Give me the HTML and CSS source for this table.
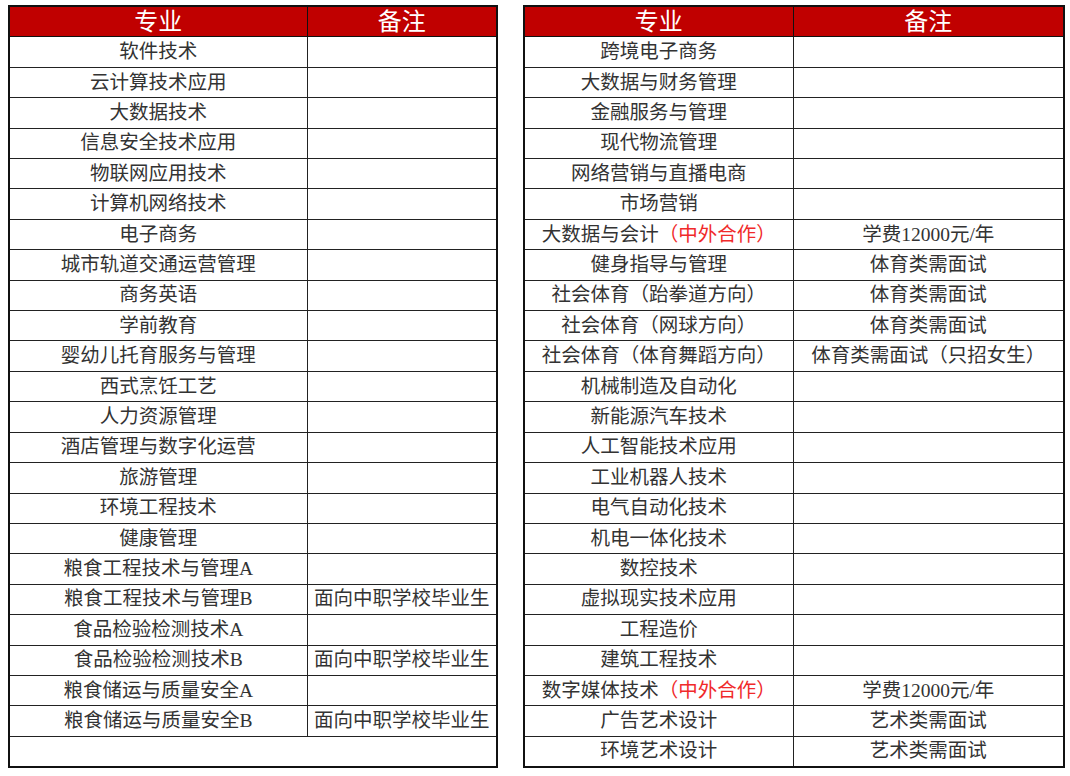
FILE: index.html
```html
<!DOCTYPE html>
<html lang="zh">
<head>
<meta charset="utf-8">
<link rel="stylesheet" href="styles.css">
</head>
<body>
<div class="page">
  <table class="tbl left">
    <colgroup><col class="c1"><col class="c2"></colgroup>
    <thead><tr><th>专业</th><th>备注</th></tr></thead>
    <tbody>
      <tr><td>软件技术</td><td></td></tr>
      <tr><td>云计算技术应用</td><td></td></tr>
      <tr><td>大数据技术</td><td></td></tr>
      <tr><td>信息安全技术应用</td><td></td></tr>
      <tr><td>物联网应用技术</td><td></td></tr>
      <tr><td>计算机网络技术</td><td></td></tr>
      <tr><td>电子商务</td><td></td></tr>
      <tr><td>城市轨道交通运营管理</td><td></td></tr>
      <tr><td>商务英语</td><td></td></tr>
      <tr><td>学前教育</td><td></td></tr>
      <tr><td>婴幼儿托育服务与管理</td><td></td></tr>
      <tr><td>西式烹饪工艺</td><td></td></tr>
      <tr><td>人力资源管理</td><td></td></tr>
      <tr><td>酒店管理与数字化运营</td><td></td></tr>
      <tr><td>旅游管理</td><td></td></tr>
      <tr><td>环境工程技术</td><td></td></tr>
      <tr><td>健康管理</td><td></td></tr>
      <tr><td>粮食工程技术与管理A</td><td></td></tr>
      <tr><td>粮食工程技术与管理B</td><td>面向中职学校毕业生</td></tr>
      <tr><td>食品检验检测技术A</td><td></td></tr>
      <tr><td>食品检验检测技术B</td><td>面向中职学校毕业生</td></tr>
      <tr><td>粮食储运与质量安全A</td><td></td></tr>
      <tr><td>粮食储运与质量安全B</td><td>面向中职学校毕业生</td></tr>
      <tr><td colspan="2"></td></tr>
    </tbody>
  </table>
  <table class="tbl right">
    <colgroup><col class="c3"><col class="c4"></colgroup>
    <thead><tr><th>专业</th><th>备注</th></tr></thead>
    <tbody>
      <tr><td>跨境电子商务</td><td></td></tr>
      <tr><td>大数据与财务管理</td><td></td></tr>
      <tr><td>金融服务与管理</td><td></td></tr>
      <tr><td>现代物流管理</td><td></td></tr>
      <tr><td>网络营销与直播电商</td><td></td></tr>
      <tr><td>市场营销</td><td></td></tr>
      <tr><td>大数据与会计<span class="red">（中外合作）</span></td><td>学费12000元/年</td></tr>
      <tr><td>健身指导与管理</td><td>体育类需面试</td></tr>
      <tr><td>社会体育（跆拳道方向）</td><td>体育类需面试</td></tr>
      <tr><td>社会体育（网球方向）</td><td>体育类需面试</td></tr>
      <tr><td>社会体育（体育舞蹈方向）</td><td>体育类需面试（只招女生）</td></tr>
      <tr><td>机械制造及自动化</td><td></td></tr>
      <tr><td>新能源汽车技术</td><td></td></tr>
      <tr><td>人工智能技术应用</td><td></td></tr>
      <tr><td>工业机器人技术</td><td></td></tr>
      <tr><td>电气自动化技术</td><td></td></tr>
      <tr><td>机电一体化技术</td><td></td></tr>
      <tr><td>数控技术</td><td></td></tr>
      <tr><td>虚拟现实技术应用</td><td></td></tr>
      <tr><td>工程造价</td><td></td></tr>
      <tr><td>建筑工程技术</td><td></td></tr>
      <tr><td>数字媒体技术<span class="red">（中外合作）</span></td><td>学费12000元/年</td></tr>
      <tr><td>广告艺术设计</td><td>艺术类需面试</td></tr>
      <tr><td>环境艺术设计</td><td>艺术类需面试</td></tr>
    </tbody>
  </table>
</div>
</body>
</html>
```

FILE: styles.css
```css
html, body {
  margin: 0;
  padding: 0;
  background: #ffffff;
}

.page {
  display: flex;
  align-items: flex-start;
  gap: 25px;
  padding: 5px 0 0 8px;
  font-family: "Liberation Serif", "Noto Sans CJK SC", serif;
}

.tbl {
  border-collapse: collapse;
  table-layout: fixed;
  border: 2px solid #111;
}

.left { width: 488px; }
.right { width: 540px; }

.c1 { width: 298px; }
.c2 { width: 190px; }
.c3 { width: 269px; }
.c4 { width: 271px; }

.tbl th {
  background: #c00000;
  color: #ffffff;
  font-weight: normal;
  font-size: 24px;
  height: 29.42px;
  padding: 0;
  line-height: 20px;
  border: 1px solid #111;
  border-top: 1px solid #888;
}

.tbl td {
  height: 29.42px;
  padding: 0;
  text-align: center;
  font-size: 19.5px;
  line-height: 20px;
  color: #333333;
  border: 1px solid #222;
  white-space: nowrap;
  overflow: hidden;
}

.red {
  color: #f02a2a;
}
```
